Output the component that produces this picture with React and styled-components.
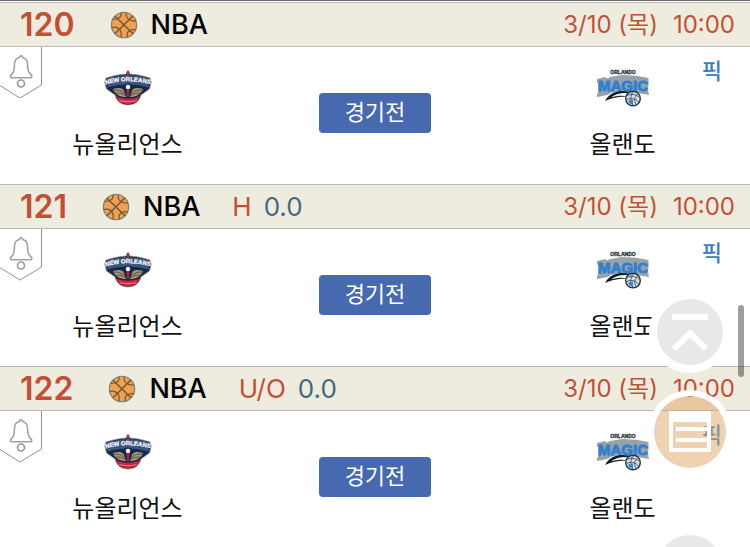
import React, { useId } from "react";
import styled, { createGlobalStyle } from "styled-components";

const GlobalStyle = createGlobalStyle`
  * {
    box-sizing: border-box;
  }
  html {
    overflow: hidden;
  }
  body {
    margin: 0;
    background: #fff;
    font-family: Inter, "Noto Sans CJK KR", sans-serif;
    color: #111;
  }
`;

const Page = styled.main`
  border-top: 1px solid #67636a;
  padding-top: 1px;
`;

const GameCard = styled.article`
  display: flex;
  flex-direction: column;
`;

const GameHeader = styled.header`
  display: flex;
  align-items: center;
  height: 45px;
  padding: 0 15px 0 20px;
  background: #eeecdf;
  border-top: 1px solid #b9b9b6;
  border-bottom: 1px solid #b9b9b6;
  line-height: 32px;
  white-space: nowrap;
`;

const GameNumber = styled.span`
  font-size: 32px;
  font-weight: 600;
  color: #c35035;
`;

const League = styled.h2`
  display: flex;
  align-items: center;
  gap: 13px;
  margin: 0 0 0 35px;
  font-size: 27px;
  font-weight: 500;
  color: #000;
`;

const Handicap = styled.span`
  display: flex;
  gap: 12px;
  margin-left: 32px;
  font-size: 26px;
  color: #c35035;
`;

const HandicapValue = styled.span`
  color: #446a80;
`;

const GameTime = styled.time`
  display: flex;
  align-items: baseline;
  gap: 15px;
  margin-left: auto;
  font-size: 24px;
  color: #c35035;
`;

const GameBody = styled.div`
  position: relative;
  display: grid;
  grid-template-columns: 34fr 32fr 34fr;
  align-items: center;
  justify-items: center;
  padding: 17px 0 22px;
`;

const Team = styled.div`
  display: flex;
  flex-direction: column;
  align-items: center;
  gap: 16px;
`;

const TeamLogo = styled.div`
  display: flex;
  align-items: center;
  justify-content: center;
  height: 48px;
`;

const TeamName = styled.span`
  font-size: 24px;
  line-height: 34px;
`;

const StatusButton = styled.button`
  width: 112px;
  height: 40px;
  padding: 0 0 2px;
  border: none;
  border-radius: 4px;
  background: #4669b0;
  color: #fff;
  font-family: inherit;
  font-size: 22px;
  line-height: 32px;
  cursor: pointer;
`;

const AlarmButton = styled.button`
  position: absolute;
  top: 0;
  left: 0;
  padding: 0;
  border: none;
  background: none;
  line-height: 0;
  cursor: pointer;
`;

const PickLink = styled.a`
  position: absolute;
  top: 8px;
  right: 28px;
  font-size: 22px;
  line-height: 32px;
  font-weight: 500;
  color: #3a80c6;
  text-decoration: none;
`;

const FloatingMenu = styled.nav`
  position: fixed;
  top: 299px;
  right: 24px;
  display: flex;
  flex-direction: column;
  align-items: center;
  gap: 31px;
`;

const ScrollButton = styled.button`
  width: 66px;
  height: 66px;
  padding: 0;
  border: none;
  border-radius: 50%;
  background: #e8e8e8;
  box-shadow: 0 0 0 8px #fff;
  line-height: 0;
  cursor: pointer;

  &:last-child {
    margin-top: 36px;
  }
`;

const SlipButton = styled.button`
  width: 72px;
  height: 72px;
  padding: 0;
  border: none;
  border-radius: 50%;
  background: rgba(222, 166, 102, 0.5);
  box-shadow: 0 0 0 6px #fff;
  line-height: 0;
  cursor: pointer;
`;

const ScrollThumb = styled.div`
  position: fixed;
  top: 305px;
  right: 6px;
  width: 6px;
  height: 72px;
  border-radius: 3px;
  background: rgba(0, 0, 0, 0.38);
`;

const LogoText = styled.text`
  font-family: "Liberation Sans", sans-serif;
  font-weight: 700;
  font-size: ${(props) => props.$size}px;
  text-anchor: middle;
`;

const Basketball = () => (
  <svg width="28" height="28" viewBox="0 0 28 28" fill="none" aria-hidden="true">
    <circle cx="14" cy="14" r="12.6" fill="#f2a04e" stroke="#8b8579" strokeWidth="1.4" />
    <g stroke="#6b5840" strokeWidth="1.2">
      <path d="M5 5.2 23 22.8M22.8 5 5 22.8" strokeWidth="1.5" />
      <path d="M11 1.8c.6 4.5-2.6 6.7-8.4 6.7" />
      <path d="M16.5 1.7c-1.5 4.3 2 8.8 9.500 8.300" />
      <path d="M1.7 16.5c6.5-1.500 10.500 2.500 9.300 9.300" />
      <path d="M17.5 26c-1.500-5 2.500-8.500 8.500-7" />
    </g>
  </svg>
);

const BellTag = () => (
  <svg width="43" height="53" viewBox="0 0 43 53" fill="none" aria-hidden="true">
    <path d="M-1 38 20 51 41.5 38V-1" fill="#fff" stroke="#929292" />
    <path
      d="M21 8.8c-1 0-1.6.8-1.6 1.8-3 .8-4.9 3.2-4.9 6.4 0 7-1 8.6-3.7 11.4-.9 1-.3 2.3.9 2.3h18.8c1.2 0 1.8-1.3.9-2.3-2.7-2.8-3.9-4.4-3.9-11.4 0-3.2-1.9-5.6-4.9-6.4 0-1-.6-1.8-1.6-1.8Z"
      stroke="#a1a1a1"
      strokeWidth="1.6"
    />
    <circle cx="21" cy="36.5" r="3.5" stroke="#999" strokeWidth="1.7" />
  </svg>
);

const PelicansLogo = () => {
  const archId = useId();

  return (
    <svg width="48" height="36" viewBox="0 0 48 36" role="img" aria-label="New Orleans Pelicans">
      <path
        d="M24 .8 26 4c7 .3 13 2 20 4l1.3 4-1.8 7-8.5 6C35.5 31 31 35 24 35S12.500 31 11 25L2.500 19 .7 12 2 8c7-2 13-3.700 20-4Z"
        fill="#15294f"
        stroke="#a99b78"
        strokeWidth=".7"
      />
      <path d="M12 26c5 3.5 19 3.5 24 0-1.5 5.5-6 8-12 8s-10.5-2.5-12-8Z" fill="#d8213f" />
      <path d="M15.5 30.5c5 1.5 12 1.5 17 0" stroke="#f3bdc5" strokeWidth=".9" strokeDasharray="1.3 .7" fill="none" />
      <path d="M2 9C15 4 33 4 46 9l-1.500 8.500C32 13.500 16 13.500 3.500 17.500Z" fill="#3d567f" />
      <path d="M9 19c6-2 10-1 11 2l2 6c-6 0-11-2.5-13-8ZM39 19c-6-2-10-1-11 2l-2 6c6 0 11-2.5 13-8Z" fill="#aa986c" />
      <path
        d="M10 20c6 0 8 1.5 11 4M38 20c-6 0-8 1.5-11 4M12 23c4 0 6 .5 9 2.5M36 23c-4 0-6 .5-9 2.5"
        stroke="#263452"
        strokeWidth=".7"
        fill="none"
      />
      <path id={archId} d="M0 15C15 10 33 10 48 15" fill="none" />
      <LogoText $size={6} fill="#f2f4f7" stroke="#f2f4f7" strokeWidth=".3">
        <textPath href={`#${archId}`} startOffset="50%">
          NEW ORLEANS
        </textPath>
      </LogoText>
      <circle cx="24" cy="17" r="3.4" fill="#15294f" />
      <circle cx="24" cy="17" r="2.2" fill="#fff" />
      <path d="M22.5 19h3l-.5 7-1 2-1-2Z" fill="#b81d3b" />
      <path d="M24 0l1.4 2-.6 4.5h-1.6L22.600 2Z" fill="#a83148" />
    </svg>
  );
};

const MagicLogo = () => (
  <svg width="54" height="38" viewBox="0 0 54 38" role="img" aria-label="Orlando Magic">
    <LogoText $size={5} x="27" y="5" fill="#24313a" stroke="#24313a" strokeWidth=".3">
      ORLANDO
    </LogoText>
    <path
      d="M1 10 9 8l2 1.500L14 8l12-2 14 .8L52.500 9v8l-1 1 1.500 8-9-1.500-3-1H15l-2 2-4 1-8 1.500V25l1-1V14l-1-.5Z"
      fill="#98a3a8"
    />
    <LogoText $size={15} x="27" y="21.5" fill="#2f80d2" stroke="#2f80d2" strokeWidth=".9">
      MAGIC
    </LogoText>
    <path d="M9 32c5-10 18-13 29-7-9-2-17-1-22 3 5-1 10-2 15-.5-7 .5-14 .5-22 4.5Z" fill="#111c23" />
    <path d="M16 28c5-3 12-4 19-2.5" stroke="#d9e0e4" strokeWidth=".7" strokeDasharray="3 1" fill="none" />
    <circle cx="37" cy="29.5" r="7.3" fill="#d6dfe4" stroke="#25333d" strokeWidth="1.4" />
    <path
      d="M31 26.5c5-2 9-1 12.5 2M30.5 30.5c5-2 9-1 12 2.5M38 22.5c-4 4-4 9-1 14M42 24.5c-4 4-4 7-2 11"
      stroke="#33424c"
      strokeWidth=".8"
      fill="none"
    />
    <path d="m32 31.5 5-1v5c-2 0-4-1-5-4ZM32 26l4-2.500-.5 2.500Z" fill="#3384ce" />
  </svg>
);

const ScrollIcon = ({ down }) => (
  <svg width="66" height="66" viewBox="0 0 66 66" fill="none" stroke="#fff" strokeWidth="6" aria-hidden="true">
    {down ? <path d="M15 48h36M17 19l16 16 16-16" /> : <path d="M15 18h36M17 50l16-16 16 16" />}
  </svg>
);

const SlipIcon = () => (
  <svg width="72" height="72" viewBox="0 0 72 72" fill="#fff" aria-hidden="true">
    <path fillRule="evenodd" d="M15 15h42v41H15ZM19 26v26h34V26Z" />
    <path d="M22 31h32v4H22ZM22 42h32v4H22Z" />
  </svg>
);

const games = [
  { number: 120 },
  { number: 121, type: "H", value: "0.0" },
  { number: 122, type: "U/O", value: "0.0" },
];

const Game = ({ number, type, value }) => (
  <GameCard>
    <GameHeader>
      <GameNumber>{number}</GameNumber>
      <League>
        <Basketball />
        NBA
      </League>
      {type && (
        <Handicap>
          {type}
          <HandicapValue>{value}</HandicapValue>
        </Handicap>
      )}
      <GameTime>
        <span>3/10 (목)</span>
        <span>10:00</span>
      </GameTime>
    </GameHeader>
    <GameBody>
      <AlarmButton type="button" aria-label="알림">
        <BellTag />
      </AlarmButton>
      <Team>
        <TeamLogo>
          <PelicansLogo />
        </TeamLogo>
        <TeamName>뉴올리언스</TeamName>
      </Team>
      <StatusButton type="button">경기전</StatusButton>
      <Team>
        <TeamLogo>
          <MagicLogo />
        </TeamLogo>
        <TeamName>올랜도</TeamName>
      </Team>
      <PickLink href="#pick">픽</PickLink>
    </GameBody>
  </GameCard>
);

const App = () => (
  <>
    <GlobalStyle />
    <Page>
      {games.map((game) => (
        <Game key={game.number} {...game} />
      ))}
    </Page>
    <FloatingMenu>
      <ScrollButton type="button" aria-label="맨 위로">
        <ScrollIcon />
      </ScrollButton>
      <SlipButton type="button" aria-label="목록">
        <SlipIcon />
      </SlipButton>
      <ScrollButton type="button" aria-label="맨 아래로">
        <ScrollIcon down />
      </ScrollButton>
    </FloatingMenu>
    <ScrollThumb />
  </>
);

export default App;
